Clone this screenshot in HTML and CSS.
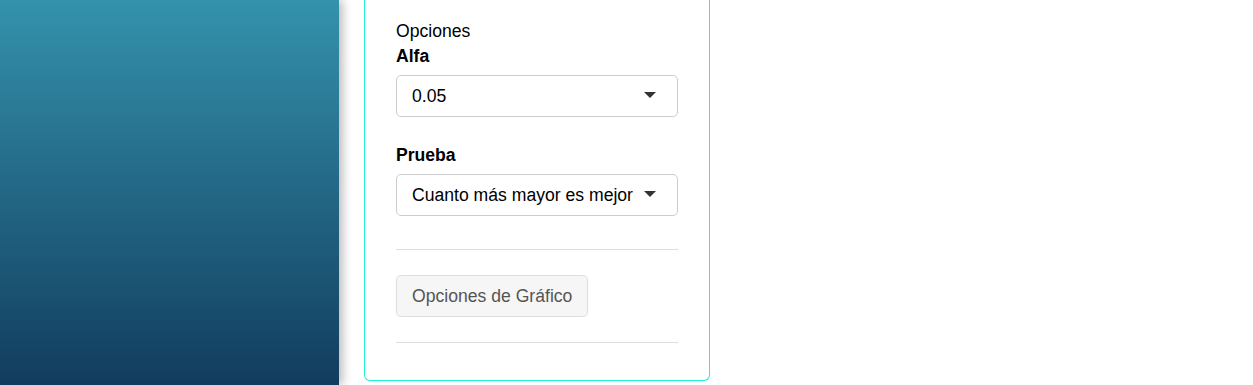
FILE: index.html
```html
<!DOCTYPE html>
<html lang="es">
<head>
    <meta charset="UTF-8">
    <meta name="viewport" content="width=device-width, initial-scale=1.0">
    <title>Opciones</title>
    <link rel="stylesheet" href="styles.css">
</head>
<body>
    <aside class="sidebar"></aside>

    <main class="main">
        <div class="panel">
            <div class="panel-title">Opciones</div>

            <div class="form-group">
                <label class="field-label">Alfa</label>
                <div class="select">
                    <span>0.05</span>
                    <span class="caret"></span>
                </div>
            </div>

            <div class="form-group">
                <label class="field-label">Prueba</label>
                <div class="select">
                    <span>Cuanto más mayor es mejor</span>
                    <span class="caret"></span>
                </div>
            </div>

            <hr class="divider">

            <button class="btn">Opciones de Gráfico</button>

            <hr class="divider divider-bottom">
        </div>
    </main>
</body>
</html>
```

FILE: styles.css
```css
html, body {
    height: 100%;
    margin: 0;
    font-family: "Liberation Sans", Arial, sans-serif;
    font-size: 17.6px;
    color: #000;
    background-color: #fff;
}

body {
    display: flex;
    overflow: hidden;
}

.sidebar {
    width: 339px;
    flex-shrink: 0;
    height: 100%;
    background: linear-gradient(to bottom, #3492ac, #123c5e);
    box-shadow: 3px 0 10px rgba(0, 0, 0, 0.3);
    position: relative;
    z-index: 1;
}

.main {
    padding-left: 25px;
}

.panel {
    width: 282px;
    padding: 19px 31px 37px;
    border: 1px solid #1cf2d6;
    border-top: none;
    border-radius: 0 0 6px 6px;
    line-height: 24px;
}

.panel-title {
    margin-bottom: 1px;
}

.field-label {
    display: block;
    font-weight: bold;
    margin-bottom: 7px;
}

.form-group + .form-group {
    margin-top: 26px;
}

.select {
    height: 40px;
    border: 1px solid #ccc;
    border-radius: 5px;
    display: flex;
    align-items: center;
    justify-content: space-between;
    padding: 0 21px 0 15px;
    white-space: nowrap;
}

.caret {
    width: 0;
    height: 0;
    border-left: 6px solid transparent;
    border-right: 6px solid transparent;
    border-top: 6px solid #333;
    margin-bottom: 2px;
}

.divider {
    border: none;
    border-top: 1px solid #ddd;
    margin: 33px 0 25px;
}

.divider-bottom {
    margin: 25px 0 0;
}

.btn {
    display: block;
    height: 42px;
    padding: 0 15px;
    font-family: inherit;
    font-size: 17.6px;
    color: #555;
    background-color: #f6f6f6;
    border: 1px solid #ddd;
    border-radius: 5px;
}
```
